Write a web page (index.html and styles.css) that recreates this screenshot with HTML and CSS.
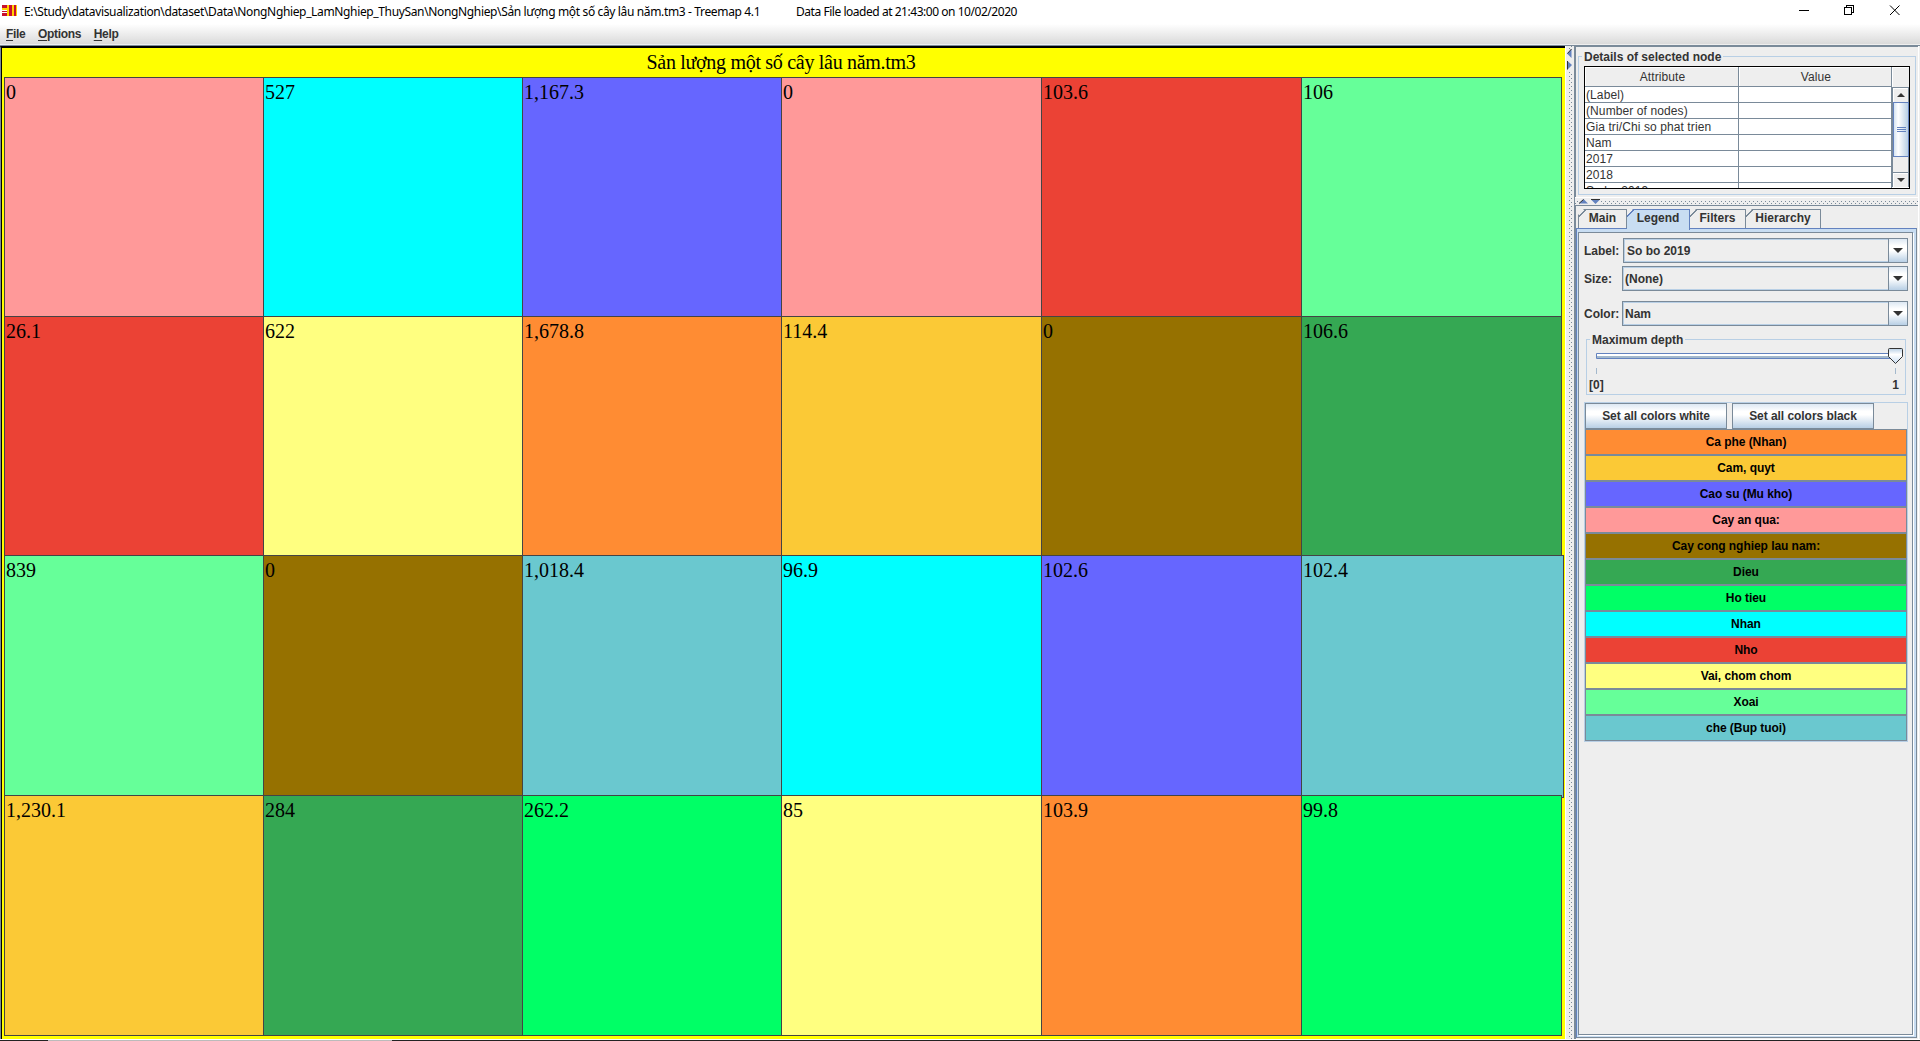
FILE: index.html
```
<!DOCTYPE html>
<html lang="vi">
<head>
<meta charset="utf-8">
<title>Treemap 4.1</title>
<link rel="stylesheet" href="styles.css">
</head>
<body>
<div class="window">
  <header class="titlebar">
    <svg class="app-icon" width="16" height="13" viewBox="0 0 16 13" shape-rendering="crispEdges"><path fill="#c8102e" d="M0 0h5v3H0zM0 6h5v1H0zM0 8h5v3H0zM7 0h3v11H7zM12 0h2v11h-2z"/><path fill="#ffd000" d="M0 3h5v2H0zM5 0h2v11H5zM10 0h2v11h-2zM14 0h1v11h-1z"/></svg>
    <span class="path">E:\Study\datavisualization\dataset\Data\NongNghiep_LamNghiep_ThuySan\NongNghiep\Sản lượng một số cây lâu năm.tm3 - Treemap 4.1</span>
    <span class="loaded">Data File loaded at 21:43:00 on 10/02/2020</span>
    <svg class="controls" width="104" height="12" viewBox="0 0 104 12" fill="none" stroke="#000" shape-rendering="crispEdges"><path d="M1 5.500h10M46 2.500h7v7h-7zM48 2v-1.500h7v7h-2"/><path shape-rendering="auto" d="M92 .5l9.500 9.500M101.500 .5l-9.500 9.500"/></svg>
  </header>
  <nav class="menubar"><span><u>F</u>ile</span><span><u>O</u>ptions</span><span><u>H</u>elp</span></nav>
  <main class="workspace">
    <section class="treemap">
      <h1 class="map-title">Sản lượng một số cây lâu năm.tm3</h1>
      <div class="cells">
        <div class="cell pink">0</div><div class="cell cyan">527</div><div class="cell blue">1,167.3</div><div class="cell pink">0</div><div class="cell red">103.6</div><div class="cell mint">106</div>
        <div class="cell red">26.1</div><div class="cell lemon">622</div><div class="cell orange">1,678.8</div><div class="cell amber">114.4</div><div class="cell brown">0</div><div class="cell green">106.6</div>
        <div class="cell mint">839</div><div class="cell brown">0</div><div class="cell teal">1,018.4</div><div class="cell cyan">96.9</div><div class="cell blue">102.6</div><div class="cell teal raised">102.4</div>
        <div class="cell amber">1,230.1</div><div class="cell green">284</div><div class="cell lime">262.2</div><div class="cell lemon">85</div><div class="cell orange">103.9</div><div class="cell lime">99.8</div>
      </div>
    </section>
    <div class="divider vertical">
      <svg width="5" height="22" viewBox="0 0 5 22"><path fill="#6382bf" d="M4.500 0v9L0 4.500zM.5 12v8.500L5 16z"/><path fill="none" stroke="#333" d="M4.500 0L.5 4.500M.5 12v8.500"/></svg>
    </div>
    <aside class="side">
      <section class="details">
        <h2 class="group-title">Details of selected node</h2>
        <div class="table">
          <div class="thead"><span>Attribute</span><span>Value</span><span></span></div>
          <div class="tbody">
            <div class="rows">
              <div class="row"><span>(Label)</span><span></span></div>
              <div class="row"><span>(Number of nodes)</span><span></span></div>
              <div class="row"><span>Gia tri/Chi so phat trien</span><span></span></div>
              <div class="row"><span>Nam</span><span></span></div>
              <div class="row"><span>2017</span><span></span></div>
              <div class="row"><span>2018</span><span></span></div>
              <div class="row"><span>So bo 2019</span><span></span></div>
            </div>
            <div class="scroll">
              <div class="scroll-btn"><svg width="8" height="4"><path fill="#333" d="M4 0l4 4H0z"/></svg></div>
              <div class="thumb"><i></i><i></i><i></i></div>
              <div class="track"></div>
              <div class="scroll-btn"><svg width="8" height="4"><path fill="#333" d="M0 0h8L4 4z"/></svg></div>
            </div>
          </div>
        </div>
      </section>
      <div class="divider horizontal">
        <svg width="22" height="5" viewBox="0 0 22 5"><path fill="#6382bf" d="M0 4.500h9L4.500 0zM12 .5h9L16.500 5z"/><path fill="none" stroke="#333" d="M0 4.500L4.500 .5M12 .5h9"/></svg>
      </div>
      <section class="lower">
        <div class="tabs">
          <div class="tab main">Main</div><div class="tab legend active">Legend</div><div class="tab filters">Filters</div><div class="tab hierarchy">Hierarchy</div>
        </div>
        <div class="page">
          <div class="page-inner">
            <div class="field first"><label>Label:</label><div class="combo">So bo 2019<b><svg width="10" height="5"><path fill="#333" d="M0 0h10L5 5z"/></svg></b></div></div>
            <div class="field"><label>Size:</label><div class="combo">(None)<b><svg width="10" height="5"><path fill="#333" d="M0 0h10L5 5z"/></svg></b></div></div>
            <div class="field color"><label>Color:</label><div class="combo">Nam<b><svg width="10" height="5"><path fill="#333" d="M0 0h10L5 5z"/></svg></b></div></div>
            <div class="depth">
              <h2 class="group-title">Maximum depth</h2>
              <svg class="slider" width="311" height="27" viewBox="0 0 311 27">
                <defs><linearGradient id="knob" x2="0" y2="1"><stop stop-color="#b8cfe5"/><stop offset=".4" stop-color="#fff"/><stop offset="1" stop-color="#c8ddf2"/></linearGradient></defs>
                <path fill="#fff" stroke="#6382bf" d="M4.500 5.500h299v5h-299z"/><path stroke="#a3b8cc" stroke-width="2" d="M5 9h298"/>
                <path fill="url(#knob)" stroke="#333" d="M297.500.5h12q1 0 1 1v7l-7 7-7-7v-7q0-1 1-1z"/>
                <path stroke="#a3b8cc" d="M4.500 20v6M303.500 20v6"/>
              </svg>
              <div class="ticks"><span>[0]</span><span>1</span></div>
            </div>
            <div class="legend-box">
              <div class="actions"><div class="btn">Set all colors white</div><div class="btn">Set all colors black</div></div>
              <div class="key orange">Ca phe (Nhan)</div>
              <div class="key amber">Cam, quyt</div>
              <div class="key blue">Cao su (Mu kho)</div>
              <div class="key pink">Cay an qua:</div>
              <div class="key brown">Cay cong nghiep lau nam:</div>
              <div class="key green">Dieu</div>
              <div class="key lime">Ho tieu</div>
              <div class="key cyan">Nhan</div>
              <div class="key red">Nho</div>
              <div class="key lemon">Vai, chom chom</div>
              <div class="key mint">Xoai</div>
              <div class="key teal">che (Bup tuoi)</div>
            </div>
          </div>
        </div>
      </section>
    </aside>
  </main>
  <footer class="bottom-edge"></footer>
</div>
</body>
</html>
```
FILE: styles.css
```
* { box-sizing: border-box; }
html, body { height: 1041px; overflow: hidden; }
body { margin: 0; background: #fff; font: bold 12px "Liberation Sans", Arial, sans-serif; color: #333; }
h1, h2 { margin: 0; font-weight: inherit; }
svg { display: block; flex: none; }

.window { width: 1920px; height: 1041px; display: flex; flex-direction: column; overflow: hidden; }
.titlebar { height: 24px; display: flex; align-items: flex-start; padding: 5px 18px 0 2px; font: 12px/14px "Noto Sans", sans-serif; color: #000; white-space: pre; }
.app-icon { margin-right: 6px; }
.path { width: 772px; letter-spacing: -.355px; }
.loaded { letter-spacing: -.46px; }
.controls { margin-left: auto; }
.menubar { height: 21px; display: flex; gap: 12.500px; padding: 3px 0 0 6px; line-height: 14px; letter-spacing: -.3px; background: linear-gradient(#fff, #dadada); border-bottom: 1px solid #eee; }
.menubar u { text-underline-offset: 2px; }

.workspace { height: 994px; display: flex; background: #eee; border-top: 1px solid #7a8a99; }
.treemap { width: 1565px; background: #ff0; border: solid; border-width: 2px 0 0 1px; border-color: #7a8a99; border-top-color: #000; box-shadow: inset 1px 0 #000; padding-left: 4px; }
.map-title { height: 30px; font: 20px/29px "Liberation Serif", "Times New Roman", serif; letter-spacing: -.3px; color: #000; text-align: center; padding-right: 8px; white-space: nowrap; }
.cells { display: grid; grid-template: 238px 238px 239px 239px / repeat(3, 258px) repeat(3, 259px); gap: 1px; }
.cell { box-shadow: 0 0 0 1px #444; padding: 2px 0 0 1px; font: 20px/24px "Liberation Serif", "Times New Roman", serif; color: #000; }
.cell.raised { margin: 0 -2px -2px 0; }
.orange { background: #ff8c33; }
.amber { background: #fbc936; }
.blue { background: #6666ff; }
.pink { background: #ff9999; }
.brown { background: #967100; }
.green { background: #35a853; }
.lime { background: #00ff66; }
.cyan { background: #00ffff; }
.red { background: #eb4235; }
.lemon { background: #ffff80; }
.mint { background: #66ff99; }
.teal { background: #6ac8cf; }

.vertical { width: 9px; border-left: 1px solid #fff; padding: 3px 0 0 1px;
  background: conic-gradient(from 0deg at 1px 1px, transparent 75%, #7a8a99 0) 3px 2px / 8px 4px, conic-gradient(from 0deg at 1px 1px, transparent 75%, #7a8a99 0) 5px 0 / 8px 4px, #eee; }
.divider svg { background: #eee; }

.side { width: 345px; border-left: 1px solid #7a8a99; border-right: 1px solid #fff; display: flex; flex-direction: column; }
.details { height: 151px; border: solid #7a8a99; border-width: 1px 0 0 1px; padding: 3px 2px 2px; position: relative; }
.group-title { font-size: 12px; line-height: 14px; white-space: nowrap; width: max-content; background: #eee; }
.details .group-title { margin: 0 0 0 4px; padding: 0 2px; position: relative; }
.details::before { content: ""; position: absolute; inset: 9px 2px 2px 2px; border: 1px solid #b8cfe5; }
.table { position: relative; margin: 2px 0 0 6px; width: 326px; height: 123px; border: 1px solid #000; background: #fff; font-weight: normal; display: flex; flex-direction: column; overflow: hidden; }
.thead { display: flex; height: 20px; flex: none; background: #eee; text-align: center; line-height: 21px; letter-spacing: .1px; }
.thead span { border-right: 1px solid #7a8a99; border-bottom: 1px solid #7a8a99; box-shadow: inset 1px 1px #fff; padding-left: 2px; }
.thead span, .row span { width: 153px; }
.thead span:first-child, .row span:first-child { width: 154px; }
.thead span:last-child { width: 17px; border: 0; }
.tbody { display: flex; height: 101px; }
.rows { width: 307px; flex: none; letter-spacing: .1px; }
.row { display: flex; height: 16px; line-height: 16px; white-space: nowrap; }
.row span { border-right: 1px solid #7a8a99; border-bottom: 1px solid #7a8a99; padding-left: 1px; }
.scroll { width: 17px; height: 100px; background: #eee; border-left: 1px solid #7a8a99; display: flex; flex-direction: column; }
.scroll-btn { height: 15px; display: grid; place-items: center; border: solid #7a8a99; border-width: 1px 1px 0 0; box-shadow: inset 1px 1px #fff; }
.thumb { height: 55px; border: 1px solid #6382bf; background: linear-gradient(90deg, #d5e4f2, #fff 30%, #b8cfe5); display: flex; flex-direction: column; justify-content: center; align-items: center; gap: 1px; }
.thumb i { width: 9px; height: 1px; background: #6382bf; }
.track { flex: 1; border-right: 1px solid #7a8a99; }

.horizontal { height: 8px; padding: 1px 0 0 4px; border-top: 1px solid #fff;
  background: conic-gradient(from 0deg at 1px 1px, transparent 75%, #7a8a99 0) 2px 3px / 4px 8px, conic-gradient(from 0deg at 1px 1px, transparent 75%, #7a8a99 0) 4px 5px / 4px 8px, #eee; }
.lower { flex: 1; display: flex; flex-direction: column; border: solid #7a8a99; border-width: 1px 0 0 1px; padding: 3px 1px 1px 0; }
.tabs { display: flex; height: 20px; padding-left: 2px; position: relative; z-index: 1; flex: none; }
.tab { height: 19px; border: solid #7a8a99; border-width: 1px 1px 0; border-left: 0; line-height: 17px; text-align: center; clip-path: polygon(6px 0, 100% 0, 100% 100%, 0 100%, 0 6px); background: linear-gradient(135deg, transparent 4px, #7a8a99 4px, #7a8a99 5px, #eee 5px); }
.tab.main { width: 49px; border-left: 1px solid #7a8a99; }
.tab.legend { width: 63px; }
.tab.filters { width: 56px; }
.tab.hierarchy { width: 75px; }
.tab.active { height: 21px; border-color: #6382bf; background: linear-gradient(135deg, transparent 4px, #6382bf 4px, #6382bf 5px, #c8ddf2 5px); }
.page { flex: 1; margin-top: -1px; border: 1px solid #6382bf; border-right-color: #7a8a99; border-bottom-color: #7a8a99; background: #c8ddf2; padding: 3px 2px 2px 1px; }
.page-inner { height: 100%; background: #eee; border: 1px solid #7a8a99; box-shadow: 1px 1px #fff; margin-right: 1px; padding: 5px 4px 0 5px; }
.field { height: 25px; margin-bottom: 3px; display: flex; align-items: center; }
.field label { width: 38px; }
.field.first label { width: 39px; }
.field.color { margin: 10px 0 0; }
.combo { flex: 1; height: 25px; border: 1px solid #7a8a99; box-shadow: inset 0 0 0 1px #b8cfe5; display: flex; align-items: center; padding-left: 2px; }
.first .combo { padding-left: 3px; }
.combo b { margin-left: auto; width: 19px; height: 23px; border-left: 1px solid #7a8a99; display: grid; place-items: center; background: linear-gradient(#dde8f3, #fff 30%, #fff 50%, #b8cfe5); }
.depth { position: relative; height: 63px; margin: 6px 2px 0; padding-top: 1px; }
.depth::before { content: ""; position: absolute; inset: 7px 0 0; border: 1px solid #b8cfe5; }
.depth .group-title { margin-left: 4px; padding: 0 2px; position: relative; }
.slider { margin: 1px 0 0 6px; position: relative; }
.ticks { display: flex; justify-content: space-between; margin: 3px 7px 0 3px; line-height: 14px; position: relative; }
.legend-box { margin-top: 7px; border: 1px solid #b8cfe5; letter-spacing: -.05px; }
.actions { display: flex; gap: 5px; }
.btn { width: 142px; height: 26px; border: 1px solid #7a8a99; line-height: 25px; text-align: center; background: linear-gradient(#dde8f3, #fff 30%, #fff 45%, #b8cfe5); }
.key { height: 26px; border: 1px solid #7a8a99; line-height: 25px; text-align: center; color: #000; }
.bottom-edge { height: 2px; background: linear-gradient(90deg, #222 48px, #bbb 48px 392px, #222 392px) 0 1px no-repeat, #fff; }
```
